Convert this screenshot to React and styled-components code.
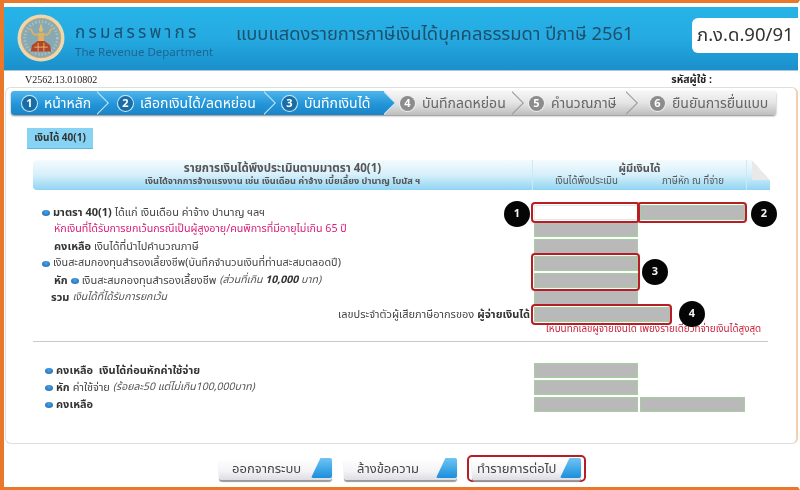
import styled, { createGlobalStyle } from "styled-components";

const Global = createGlobalStyle`
    html, body {
        margin: 0;
        padding: 0;
        background: #fff;
    }
    * {
        box-sizing: border-box;
    }
`

const Frame = styled.div`
    width: 800px;
    height: 490px;
    overflow: hidden;
    display: flex;
    flex-direction: column;
    padding-top: 4px;
    background: #fff;
    border-top: 3px solid #e9782b;
    border-left: 4px solid #e9782b;
    border-bottom: 3px solid #e9782b;
    border-right: 2px solid #fff;
    font-family: "Noto Sans Thai", "Noto Sans", "Liberation Sans", sans-serif;
    color: #444;
    filter: blur(0.35px);
`

const Header = styled.header`
    height: 64px;
    flex: none;
    display: flex;
    align-items: center;
    padding-left: 13px;
    background: linear-gradient(#27b3e8 0%, #25ace2 45%, #1a8fcb 100%);
    border-bottom: 1px solid #a9c6d6;
`
const Seal = styled.svg`
    width: 48px;
    height: 48px;
    flex: none;
    margin-top: -2px;
`
const Brand = styled.div`
    width: 161px;
    margin: 5px 0 0 10px;
    flex: none;
`
const BrandThai = styled.div`
    font-size: 17px;
    line-height: 24px;
    letter-spacing: 3.2px;
    color: #1b4f6e;
`
const BrandEng = styled.div`
    font-size: 11.5px;
    line-height: 16px;
    color: #1d6690;
    white-space: nowrap;
`
const Title = styled.h1`
    flex: 1;
    margin: -9px 0 0;
    font-size: 18.4px;
    line-height: 26px;
    font-weight: 400;
    color: #1f4f6c;
    white-space: nowrap;
`
const FormCode = styled.div`
    width: 106px;
    height: 35px;
    margin-top: -7px;
    padding-left: 5px;
    flex: none;
    border-radius: 6px 0 0 6px;
    background: #fff;
    font-size: 18.5px;
    line-height: 35px;
    color: #333;
    white-space: nowrap;
`

const MetaRow = styled.div`
    height: 16px;
    flex: none;
    display: flex;
    align-items: center;
    justify-content: space-between;
    padding: 1px 86px 0 21px;
`
const Version = styled.span`
    font-family: "Liberation Serif", serif;
    font-size: 10px;
    color: #222;
`
const UserCode = styled.span`
    font-size: 10.5px;
    font-weight: 700;
    color: #222;
`

const Panel = styled.main`
    height: 357px;
    flex: none;
    margin: 0 0 0 1px;
    padding: 3px 5px 0;
    border: 1px solid #dedede;
    border-right: 2px solid #f3cfae;
    border-radius: 6px;
`

const Steps = styled.nav`
    display: flex;
    height: 24px;
    width: 765px;
    border-radius: 3px;
    box-shadow: 0 1px 2px #888;
`
const Step = styled.div`
    --step-bg: ${p => (p.$active
        ? "linear-gradient(#4fb6ec, #2295d8 55%, #1a84c6)"
        : "linear-gradient(#f6f6f6, #e4e4e4 50%, #bebebe)")};
    position: relative;
    z-index: ${p => 10 - p.$index};
    width: ${p => p.$width}px;
    display: flex;
    align-items: center;
    gap: 7px;
    padding-left: ${p => p.$pad}px;
    font-size: 14px;
    white-space: nowrap;
    color: ${p => (p.$active ? "#fff" : "#666")};
    background: var(--step-bg);
    &:first-child {
        border-radius: 3px 0 0 3px;
    }
    &:last-child {
        border-radius: 0 3px 3px 0;
    }
    &:not(:last-child)::before,
    &:not(:last-child)::after {
        content: "";
        position: absolute;
        top: 0;
        width: 12px;
        height: 100%;
        clip-path: polygon(0 0, 100% 50%, 0 100%);
    }
    &:not(:last-child)::before {
        right: -12px;
        background: ${p => (p.$active ? "#c4e6f8" : "#9a9a9a")};
    }
    &:not(:last-child)::after {
        right: -10.5px;
        background: var(--step-bg);
    }
`
const StepText = styled.span`
    position: relative;
    z-index: 1;
`
const StepNumber = styled.span`
    position: relative;
    z-index: 1;
    width: 15px;
    height: 15px;
    border-radius: 50%;
    display: flex;
    align-items: center;
    justify-content: center;
    font-size: 11px;
    font-weight: 700;
    color: #fff;
    background: ${p => (p.$active ? "#1a6ea8" : "#8c8c8c")};
    box-shadow: 0 0 0 1px ${p => (p.$active ? "#cfeafa" : "#eee")};
`

const Tab = styled.div`
    width: 66px;
    height: 21px;
    margin: 13px 0 11px 16px;
    background: #86d3f3;
    border-bottom: 1px solid #5eb9e0;
    font-size: 10px;
    font-weight: 700;
    line-height: 20px;
    text-align: center;
    color: #333;
`

const Band = styled.div`
    position: relative;
    width: 737px;
    height: 30px;
    margin-left: 22px;
    display: grid;
    grid-template-columns: 500px 214px 1fr;
    border-radius: 4px 0 0 4px;
    background: linear-gradient(#f4fbfe, #d6effa 50%, #8fd4f3);
    &::after {
        content: "";
        position: absolute;
        top: 0;
        right: 0;
        width: 18px;
        height: 20px;
        background: linear-gradient(to top right, #e9e9e9 0 49%, #fff 50%);
    }
`
const BandCell = styled.div`
    text-align: center;
    padding-top: 2px;
    border-right: ${p => (p.$divided ? "1px solid #cbe9f6" : "0")};
    &:first-child {
        border-right: 1px solid #cbe9f6;
    }
`
const BandTitle = styled.div`
    font-size: ${p => p.$size || 11.5}px;
    line-height: 14px;
    height: 14px;
    font-weight: 700;
    color: #555;
    white-space: nowrap;
`
const BandSub = styled.div`
    font-size: ${p => (p.$plain ? 9.7 : 9.2)}px;
    line-height: 11px;
    height: 11px;
    font-weight: ${p => (p.$plain ? 400 : 700)};
    color: #555;
    white-space: nowrap;
`
const BandSplit = styled.div`
    display: flex;
    justify-content: space-around;
`

const FormGrid = styled.section`
    margin: ${p => p.$top}px 0 0 22px;
    display: grid;
    grid-template-columns: 499px 104px 105px;
    grid-auto-rows: 15px;
    row-gap: 2px;
    column-gap: 2px;
    width: 712px;
`
const Label = styled.div`
    grid-column: 1;
    grid-row: ${p => p.$row};
    display: flex;
    align-items: center;
    justify-content: ${p => (p.$right ? "flex-end" : "flex-start")};
    gap: 3px;
    padding-left: ${p => p.$indent || 0}px;
    padding-right: ${p => (p.$right ? 2 : 0)}px;
    font-size: ${p => p.$size || 11}px;
    line-height: 15px;
    white-space: nowrap;
    color: ${p => p.$color || "#444"};
`
const Strong = styled.b`
    color: #333;
    font-weight: 700;
`
const Note = styled.i`
    color: #555;
    font-size: 10.5px;
`
const Bullet = styled.span`
    width: 8px;
    height: 6px;
    flex: none;
    border-radius: 50%;
    background: radial-gradient(circle at 50% 35%, #4aa3e6, #1a62ad);
`
const Field = styled.div`
    grid-column: ${p => p.$col || 2} / span ${p => p.$span || 1};
    grid-row: ${p => p.$row};
    width: ${p => p.$width || "auto"};
    background: ${p => (p.$blank ? "#fff" : "#b9b9b9")};
    border: 1px solid ${p => (p.$blank ? "#e8e8e8" : "#a5cf9e")};
`
const Ring = styled.div`
    position: relative;
    grid-column: ${p => p.$col || 2} / span ${p => p.$span || 1};
    grid-row: ${p => p.$row} / span ${p => p.$rows || 1};
    width: ${p => p.$width || "auto"};
    margin: -3px -2px -3px -3px;
    border: 2px solid #b81d24;
    border-radius: 4px;
`
const Badge = styled.span`
    position: absolute;
    top: ${p => p.$top}px;
    left: ${p => p.$left}px;
    width: 26px;
    height: 26px;
    border-radius: 50%;
    background: #050505;
    color: #f4f4f4;
    font-size: 11px;
    font-weight: 700;
    line-height: 26px;
    text-align: center;
    z-index: 3;
`

const PayerNote = styled.div`
    margin: 1px 0 0 535px;
    font-size: 9.9px;
    line-height: 13px;
    color: #c8263c;
    white-space: nowrap;
`
const Rule = styled.hr`
    width: 735px;
    height: 1px;
    margin: 5px 0 0 22px;
    border: 0;
    background: #c9c9c9;
`

const Actions = styled.footer`
    flex: 1;
    display: flex;
    align-items: flex-start;
    gap: 12px;
    padding: 15px 0 0 215px;
`
const Button = styled.div`
    position: relative;
    width: ${p => p.$width || 113}px;
    height: 21px;
    padding-left: ${p => p.$pad || 13}px;
    border-radius: 3px;
    background: linear-gradient(#fff, #f3f3f6 60%, #dcdce2);
    box-shadow: 0 2px 1px #9a9a9a;
    font-size: 13px;
    line-height: 21px;
    color: #444;
    white-space: nowrap;
    &::after {
        content: "";
        position: absolute;
        top: -1px;
        right: 0;
        width: 21px;
        height: 20px;
        clip-path: polygon(45% 0, 100% 0, 100% 100%, 0 100%);
        border-radius: 2px;
        background: linear-gradient(#6fc4f3, #1b8fdc);
    }
`
const ButtonRing = styled.div`
    padding: 2px 3px 0;
    margin: -4px 0 0 -2px;
    border: 2px solid #b81d24;
    border-radius: 5px;
`

const steps = [
    { width: 86, pad: 11, label: "หน้าหลัก", active: true },
    { width: 167, pad: 21, label: "เลือกเงินได้/ลดหย่อน", active: true },
    { width: 120, pad: 18, label: "บันทึกเงินได้", active: true },
    { width: 128, pad: 16, label: "บันทึกลดหย่อน" },
    { width: 114, pad: 17, label: "คำนวณภาษี" },
    { width: 150, pad: 24, label: "ยืนยันการยื่นแบบ" },
]

const SealMark = () => (
    <Seal viewBox="0 0 50 50">
        <circle cx="25" cy="25" r="24.5" fill="#ecd7ae" />
        <circle cx="25" cy="25" r="20.5" fill="#86a9b4" stroke="#c9a66c" strokeWidth="1" />
        <circle cx="25" cy="25" r="17" fill="none" stroke="#a9bfc0" strokeWidth="3" strokeDasharray="1.500 2" />
        <path d="M25 9.500l1.800 5.500h-3.600z" fill="#e6bb6c" />
        <circle cx="25" cy="16.500" r="2.200" fill="#e6bb6c" />
        <path d="M22.500 19.500h5l.8 8.500h-6.600z" fill="#dfb262" />
        <path d="M23 21c-4 1.500-7 0-8-4.500l-2-1M27 21c4 1.500 7 0 8-4.500l2-1" stroke="#dfb262" strokeWidth="1.800" fill="none" />
        <path d="M21.500 28h7l6 4.500 1 6.500H14.500l1-6.500z" fill="#b4452a" />
        <path d="M18 34.500h14M22 30v9M28 30v9" stroke="#e4b768" strokeWidth="1" fill="none" />
    </Seal>
)

const App = () => {
    return (
        <Frame>
            <Global />
            <Header>
                <SealMark />
                <Brand>
                    <BrandThai>กรมสรรพากร</BrandThai>
                    <BrandEng>The Revenue Department</BrandEng>
                </Brand>
                <Title>แบบแสดงรายการภาษีเงินได้บุคคลธรรมดา ปีภาษี 2561</Title>
                <FormCode>ภ.ง.ด.90/91</FormCode>
            </Header>
            <MetaRow>
                <Version>V2562.13.010802</Version>
                <UserCode>รหัสผู้ใช้ :</UserCode>
            </MetaRow>
            <Panel>
                <Steps>
                    {steps.map((s, i) => (
                        <Step key={s.label} $index={i} $width={s.width} $pad={s.pad} $active={s.active}>
                            <StepNumber $active={s.active}>{i + 1}</StepNumber>
                            <StepText>{s.label}</StepText>
                        </Step>
                    ))}
                </Steps>
                <Tab>เงินได้ 40(1)</Tab>
                <Band>
                    <BandCell>
                        <BandTitle>รายการเงินได้พึงประเมินตามมาตรา 40(1)</BandTitle>
                        <BandSub>เงินได้จากการจ้างแรงงาน เช่น เงินเดือน ค่าจ้าง เบี้ยเลี้ยง บำนาญ โบนัส ฯ</BandSub>
                    </BandCell>
                    <BandCell $divided>
                        <BandTitle $size={11}>ผู้มีเงินได้</BandTitle>
                        <BandSplit>
                            <BandSub $plain>เงินได้พึงประเมิน</BandSub>
                            <BandSub $plain>ภาษีหัก ณ ที่จ่าย</BandSub>
                        </BandSplit>
                    </BandCell>
                    <BandCell />
                </Band>

                <FormGrid $top={15}>
                    <Label $row={1} $indent={9}><Bullet /> <Strong>มาตรา 40(1)</Strong> ได้แก่ เงินเดือน ค่าจ้าง บำนาญ ฯลฯ</Label>
                    <Label $row={2} $indent={21} $size={10.7} $color="#d81f78">หักเงินที่ได้รับการยกเว้นกรณีเป็นผู้สูงอายุ/คนพิการที่มีอายุไม่เกิน 65 ปี</Label>
                    <Label $row={3} $indent={21}><Strong>คงเหลือ</Strong> เงินได้ที่นำไปคำนวณภาษี</Label>
                    <Label $row={4} $indent={9} $size={10.8}><Bullet /> เงินสะสมกองทุนสำรองเลี้ยงชีพ(บันทึกจำนวนเงินที่ท่านสะสมตลอดปี)</Label>
                    <Label $row={5} $indent={21}><Strong>หัก</Strong><Bullet /> เงินสะสมกองทุนสำรองเลี้ยงชีพ <Note>(ส่วนที่เกิน <Strong>10,000</Strong> บาท)</Note></Label>
                    <Label $row={6} $indent={18}><Strong>รวม</Strong> <Note>เงินได้ที่ได้รับการยกเว้น</Note></Label>
                    <Label $row={7} $right>เลขประจำตัวผู้เสียภาษีอากรของ <Strong>ผู้จ่ายเงินได้</Strong></Label>

                    <Field $row={1} $blank />
                    <Field $row={1} $col={3} />
                    {[2, 3, 4, 5, 6].map(row => <Field key={row} $row={row} />)}
                    <Field $row={7} $span={2} $width="137px" />

                    <Ring $row={1}><Badge $top={-3} $left={-29}>1</Badge></Ring>
                    <Ring $row={1} $col={3}><Badge $top={-3} $left={112}>2</Badge></Ring>
                    <Ring $row={4} $rows={2}><Badge $top={4} $left={109}>3</Badge></Ring>
                    <Ring $row={7} $span={2} $width="141px"><Badge $top={-5} $left={146}>4</Badge></Ring>
                </FormGrid>
                <PayerNote>ให้บันทึกเลขผู้จ่ายเงินได้ เพียงรายเดียวที่จ่ายเงินได้สูงสุด</PayerNote>
                <Rule />
                <FormGrid $top={21}>
                    <Label $row={1} $indent={12}><Bullet /> <Strong>คงเหลือ&nbsp; เงินได้ก่อนหักค่าใช้จ่าย</Strong></Label>
                    <Label $row={2} $indent={12}><Bullet /> <Strong>หัก</Strong> ค่าใช้จ่าย<Note>(ร้อยละ50 แต่ไม่เกิน100,000บาท)</Note></Label>
                    <Label $row={3} $indent={12}><Bullet /> <Strong>คงเหลือ</Strong></Label>
                    <Field $row={1} />
                    <Field $row={2} />
                    <Field $row={3} />
                    <Field $row={3} $col={3} />
                </FormGrid>
            </Panel>
            <Actions>
                <Button>ออกจากระบบ</Button>
                <Button>ล้างข้อความ</Button>
                <ButtonRing><Button $width={109} $pad={5}>ทำรายการต่อไป</Button></ButtonRing>
            </Actions>
        </Frame>
    )
}

export default App;
